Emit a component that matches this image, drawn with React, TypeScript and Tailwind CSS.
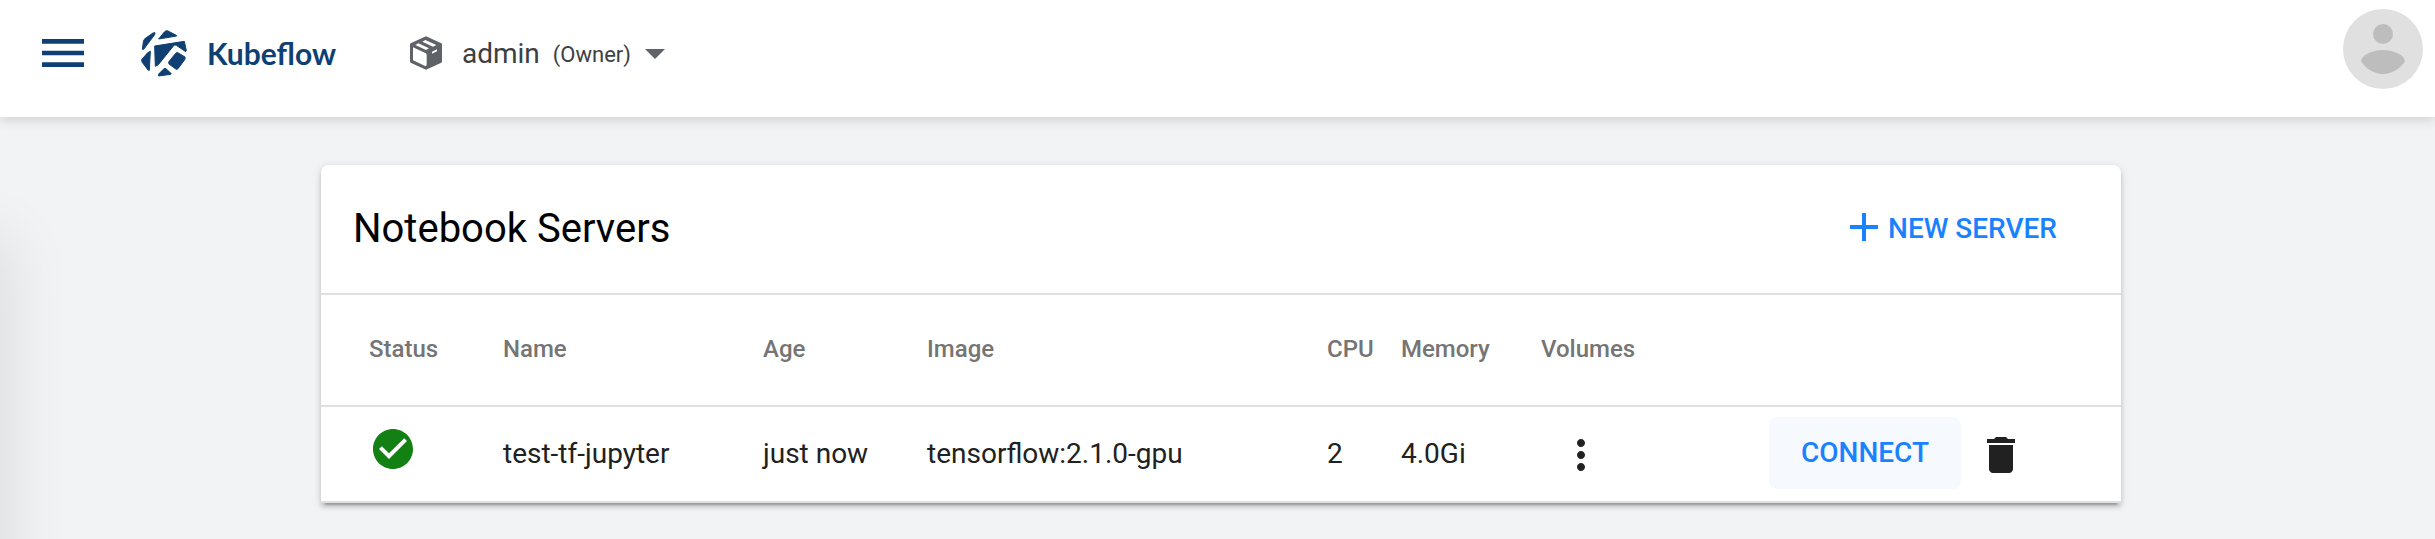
import type { ReactNode } from 'react';

type Server = {
  name: string;
  age: string;
  image: string;
  cpu: string;
  memory: string;
};

const servers: Server[] = [
  { name: 'test-tf-jupyter', age: 'just now', image: 'tensorflow:2.1.0-gpu', cpu: '2', memory: '4.0Gi' },
];

function Icon({ d, className }: { d: string; className: string }) {
  return (
    <svg viewBox="0 0 24 24" fill="currentColor" aria-hidden="true" className={className}>
      <path d={d} />
    </svg>
  );
}

function KubeflowMark() {
  return (
    <svg viewBox="0 0 138 141" aria-hidden="true" className="h-[47px] w-[46px]">
      <g fill="#0f3f73" stroke="#0f3f73" strokeWidth="3" strokeLinejoin="round">
        <path d="M4 58 L7 36 Q8 29 13 25 L36 9 L42 8 L41 14 L8 58Z" />
        <path d="M53 27 L70 6 Q75 0 81 3 L106 16 L107 18Z" />
        <path d="M41 48 L130 34 L136 62 L134 65 L106 46 Q101 43 98 47 L52 104 L43 109Z" />
        <path d="M20 68 L28 64 L25 121 L21 120 L3 96 L2 89Z" />
        <path d="M83 96 L104 70 Q108 66 112 69 L132 81 L132 88 L111 116 Q107 120 103 116 L84 102Z" />
        <path d="M53 138 L53 132 L68 117 Q72 113 76 117 L91 131 L89 133Z" />
      </g>
    </svg>
  );
}

function PackageIcon() {
  return (
    <svg viewBox="0 0 96 100" aria-hidden="true" className="h-[34px] w-8">
      <path
        fill="#5f6368"
        fillRule="evenodd"
        d="M48 0 L94 21 Q96 22 96 25 V75 Q96 78 94 79 L48 100 L2 79 Q0 78 0 75 V25 Q0 22 2 21Z M9 33 V72 L47 90 Q50 88 50 84 V56 Q50 52 46 50Z M16 26 L25 21 L57 36 L48 41Z M37 16 L46 11 L79 26 L69 31Z M66 46 L81 39 V45 L66 52Z"
      />
    </svg>
  );
}

function Header() {
  return (
    <header className="relative z-20 flex h-[117px] items-start justify-between bg-white pr-3 pl-[35px] shadow-[0_4px_10px_rgba(0,0,0,0.12)]">
      <div className="flex h-[106px] items-center">
        <button type="button" aria-label="Menu" className="text-[#0f3f73]">
          <Icon d="M3 18h18v-2H3v2zm0-5h18v-2H3v2zm0-7v2h18V6H3z" className="size-14" />
        </button>
        <a href="#" className="ml-[50px] flex items-center gap-5">
          <KubeflowMark />
          <span className="font-['Lato',sans-serif] text-[30px] leading-10 font-bold text-[#0f3f73]">Kubeflow</span>
        </a>
        <button type="button" className="ml-[74px] flex items-center text-[#3c4043]">
          <PackageIcon />
          <span className="ml-5 pt-0.5 text-[28px] leading-10">admin</span>
          <span className="ml-[13px] pt-1 text-[22px] leading-10">(Owner)</span>
          <Icon d="M7 10l5 5 5-5z" className="size-12 text-[#5f6368]" />
        </button>
      </div>
      <button type="button" aria-label="Account" className="mt-[9px]">
        <svg viewBox="0 0 80 80" aria-hidden="true" className="size-20">
          <circle cx="40" cy="40" r="40" fill="#e0e0e0" />
          <circle cx="40" cy="25" r="10" fill="#bdbdbd" />
          <path d="M18 52C19 45 31 41 40 41s21 4 22 11c-3 6-12 13-22 13s-19-7-22-13z" fill="#bdbdbd" />
        </svg>
      </button>
    </header>
  );
}

function HeadCell({ children }: { children?: ReactNode }) {
  return <th scope="col" className="p-0 pb-0.5 text-left font-medium">{children}</th>;
}

function ServerTable() {
  return (
    <table className="w-full table-fixed border-collapse">
      <colgroup>
        <col className="w-[182px]" />
        <col className="w-[260px]" />
        <col className="w-[164px]" />
        <col className="w-[400px]" />
        <col className="w-[74px]" />
        <col className="w-[140px]" />
        <col className="w-[228px]" />
        <col />
      </colgroup>
      <thead>
        <tr className="h-28 border-y-2 border-[#e0e0e0] text-2xl text-[#757575]">
          <th scope="col" className="p-0 pb-0.5 pl-12 text-left font-medium">Status</th>
          <HeadCell>Name</HeadCell>
          <HeadCell>Age</HeadCell>
          <HeadCell>Image</HeadCell>
          <HeadCell>CPU</HeadCell>
          <HeadCell>Memory</HeadCell>
          <HeadCell>Volumes</HeadCell>
          <td />
        </tr>
      </thead>
      <tbody>
        {servers.map((server) => (
          <tr key={server.name} className="h-24 border-b-2 border-[#e0e0e0] text-[28px] text-[#212121]">
            <td className="p-0 pb-2.5 pl-12">
              <Icon
                d="M12 2C6.48 2 2 6.48 2 12s4.48 10 10 10 10-4.48 10-10S17.52 2 12 2zm-2 15l-5-5 1.41-1.41L10 14.17l7.59-7.59L19 8l-9 9z"
                className="size-12 text-[#128012]"
              />
            </td>
            <td className="p-0">{server.name}</td>
            <td className="p-0">{server.age}</td>
            <td className="p-0">{server.image}</td>
            <td className="p-0">{server.cpu}</td>
            <td className="p-0">{server.memory}</td>
            <td className="p-0 pt-0.5 pl-4">
              <button type="button" aria-label="Volumes" className="block">
                <Icon
                  d="M12 8c1.1 0 2-.9 2-2s-.9-2-2-2-2 .9-2 2 .9 2 2 2zm0 2c-1.1 0-2 .9-2 2s.9 2 2 2 2-.9 2-2-.9-2-2-2zm0 6c-1.1 0-2 .9-2 2s.9 2 2 2 2-.9 2-2-.9-2-2-2z"
                  className="size-12"
                />
              </button>
            </td>
            <td className="p-0 pb-0.5">
              <div className="flex items-center gap-4">
                <button type="button" className="h-[72px] rounded-lg bg-[#f6faff] px-8 font-medium text-[#1a82ff]">
                  CONNECT
                </button>
                <button type="button" aria-label="Delete" className="pt-1">
                  <Icon d="M6 19c0 1.1.9 2 2 2h8c1.1 0 2-.9 2-2V7H6v12zM19 4h-3.5l-1-1h-5l-1 1H5v2h14V4z" className="size-12" />
                </button>
              </div>
            </td>
          </tr>
        ))}
      </tbody>
    </table>
  );
}

export default function App() {
  return (
    <div className="relative min-h-screen overflow-hidden bg-[#f1f3f4] font-['Roboto',sans-serif]">
      <Header />
      <div className="absolute top-[246px] right-full bottom-[-100px] w-80 shadow-[0_0_60px_10px_rgba(0,0,0,0.09)]" />
      <main className="pt-12 pr-12 pl-[55px]">
        <section className="relative mx-auto max-w-[1800px] rounded-t-lg bg-white shadow-[0_6px_2px_-4px_rgba(0,0,0,0.2),0_4px_4px_0_rgba(0,0,0,0.14),0_2px_10px_0_rgba(0,0,0,0.12)]">
          <div className="flex h-32 items-center justify-between pr-16 pl-8">
            <h1 className="text-[40px] leading-[56px] text-black">Notebook Servers</h1>
            <button type="button" className="flex items-center text-[28px] font-medium text-[#1a82ff]">
              <Icon d="M19 13h-6v6h-2v-6H5v-2h6V5h2v6h6v2z" className="mb-1 size-12" />
              NEW SERVER
            </button>
          </div>
          <ServerTable />
        </section>
      </main>
    </div>
  );
}
